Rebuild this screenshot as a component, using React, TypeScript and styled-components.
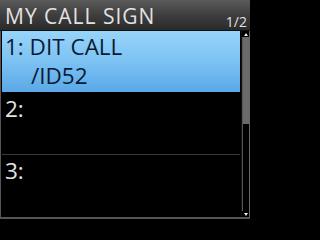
import React from "react";
import styled, { createGlobalStyle } from "styled-components";

const Global = createGlobalStyle`
  html, body { margin: 0; padding: 0; background: #000; }
  body { width: 250px; height: 219px; overflow: hidden; }
`;

const Screen = styled.div`
  width: 250px;
  height: 219px;
  background: #000;
  display: flex;
  flex-direction: column;
  font-family: "Open Sans", "DejaVu Sans", sans-serif;
  box-sizing: border-box;
  overflow: hidden;
`;

const Header = styled.div`
  height: 30px;
  flex: none;
  background: linear-gradient(#5a5a5a 0%, #3e3e3e 50%, #2a2a2a 100%);
  display: flex;
  align-items: flex-end;
  justify-content: space-between;
  padding: 0 3px 0 5px;
  border-bottom: 1px solid #111;
`;

const Title = styled.div`
  color: #e2e2e2;
  font-size: 21px;
  line-height: 28px;
  letter-spacing: 1px;
`;

const Page = styled.div`
  color: #e0e0e0;
  font-size: 14px;
  line-height: 14px;
  padding-bottom: 1px;
`;

const Body = styled.div`
  flex: 1;
  display: flex;
  border-left: 1px solid #555;
  border-bottom: 2px solid #555;
`;

const List = styled.div`
  flex: 1;
  display: flex;
  flex-direction: column;
  padding: 0 1px;
`;

const Row = styled.div<{ $active?: boolean; $last?: boolean }>`
  height: 62px;
  flex: none;
  box-sizing: border-box;
  border-bottom: ${(p) => (p.$last ? "none" : "1px solid #3a3a3a")};
  background: ${(p) =>
    p.$active ? "linear-gradient(#98d4fa 0%, #7cc2f2 50%, #5aa8e8 100%)" : "#000"};
  background-clip: padding-box;
  border-bottom-color: ${(p) => (p.$active ? "#000" : "#3a3a3a")};
  color: ${(p) => (p.$active ? "#0b1a33" : "#e4e4e4")};
  font-size: 22.5px;
  line-height: 29px;
  padding: 1px 0 0 3px;
`;

const Indent = styled.div`
  padding-left: 26px;
`;

const Scrollbar = styled.div`
  width: 7px;
  flex: none;
  display: flex;
  flex-direction: column;
  border-left: 1px solid #111;
  border-right: 1px solid #666;
  background: #000;
`;

const Arrow = styled.div<{ $down?: boolean }>`
  height: 6px;
  flex: none;
  background: #000;
  display: flex;
  align-items: center;
  justify-content: center;
  &::after {
    content: "";
    width: 0;
    height: 0;
    border-left: 2.5px solid transparent;
    border-right: 2.5px solid transparent;
    ${(p) =>
      p.$down ? "border-top: 3px solid #eee;" : "border-bottom: 3px solid #eee;"}
  }
`;

const Track = styled.div`
  flex: 1;
  display: flex;
  flex-direction: column;
  border-left: 1px solid #555;
`;

const Thumb = styled.div`
  height: 87px;
  background: #6a6a6a;
`;

export default function App() {
  return (
    <>
      <Global />
      <Screen>
        <Header>
          <Title>MY CALL SIGN</Title>
          <Page>1/2</Page>
        </Header>
        <Body>
          <List>
            <Row $active>
              1: DIT CALL
              <Indent>/ID52</Indent>
            </Row>
            <Row>2:</Row>
            <Row $last>3:</Row>
          </List>
          <Scrollbar>
            <Arrow />
            <Track>
              <Thumb />
            </Track>
            <Arrow $down />
          </Scrollbar>
        </Body>
      </Screen>
    </>
  );
}
